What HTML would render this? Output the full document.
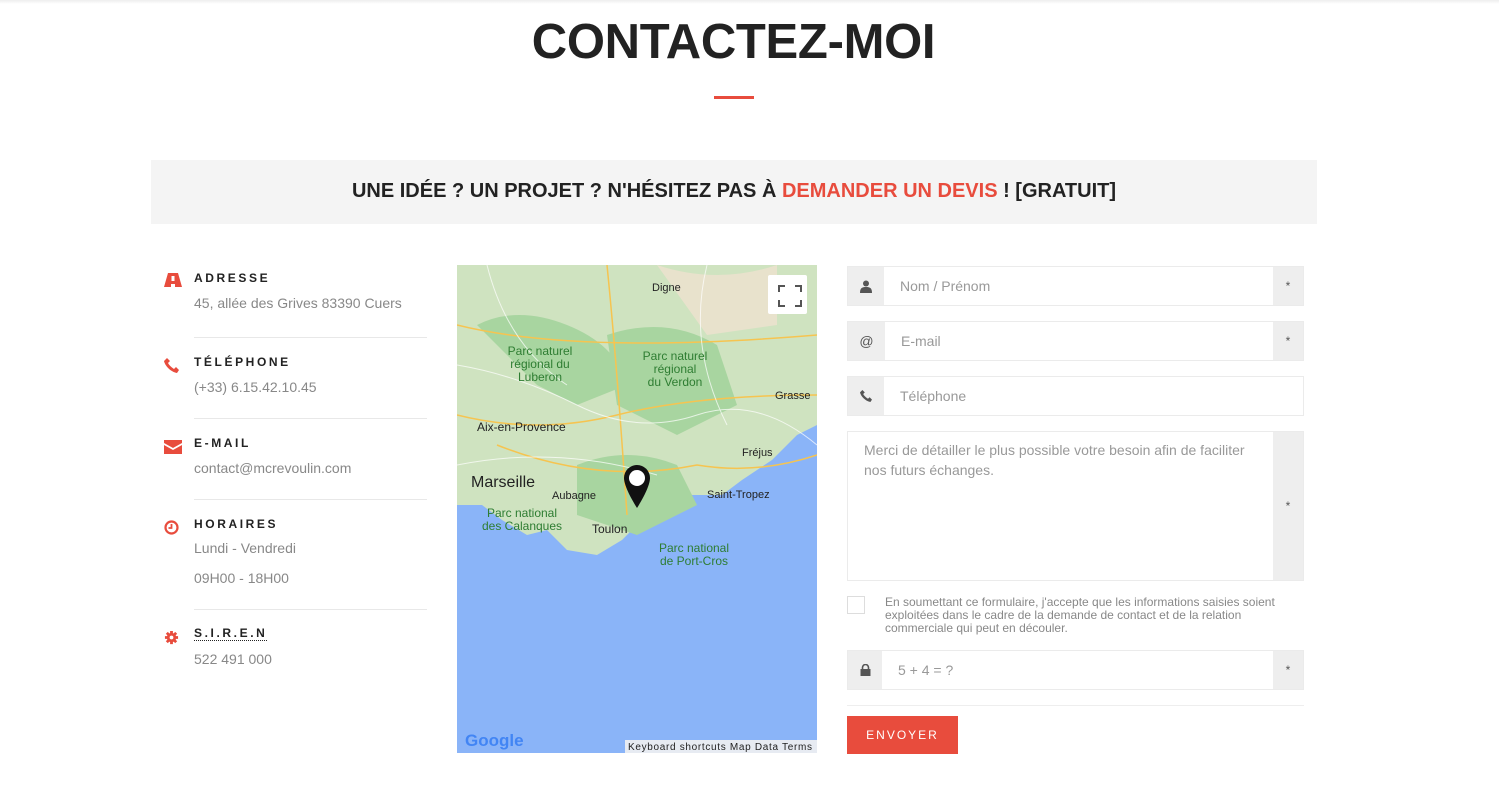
<!DOCTYPE html>
<html><head><meta charset="utf-8"><style>
*{box-sizing:border-box;margin:0;padding:0}
body{width:1499px;height:808px;background:#fff;font-family:"Liberation Sans",sans-serif;position:relative;overflow:hidden}
.a{position:absolute}
h1{position:absolute;top:14px;left:0;width:1467px;text-align:center;font-size:49px;font-weight:bold;color:#222;letter-spacing:-0.3px}
.lbl{position:absolute;left:194px;font-size:12px;font-weight:bold;letter-spacing:2.6px;color:#222}
.val{position:absolute;left:194px;font-size:14px;color:#888}
.hr{position:absolute;left:194px;width:233px;height:1px;background:#e8e8e8}
.ic{position:absolute;left:164px}
.fld{position:absolute;left:847px;width:457px;border:1px solid #ebebeb;background:#fff}
.pre{position:absolute;left:0;top:0;bottom:0;background:#eee;display:flex;align-items:center;justify-content:center;color:#555;font-size:14px}
.suf{position:absolute;right:0;top:0;bottom:0;width:30px;background:#eee;display:flex;align-items:center;justify-content:center;color:#555;font-size:12px}
.ph{position:absolute;color:#999;font-size:14px}
</style></head><body>
<div class="a" style="left:0;top:0;width:1499px;height:4px;background:linear-gradient(#eee,#fff)"></div>
<h1>CONTACTEZ-MOI</h1>
<div class="a" style="left:714px;top:96px;width:40px;height:3px;background:#e84c3d"></div>
<div class="a" style="left:151px;top:160px;width:1166px;height:64px;background:#f4f4f4;text-align:center;line-height:62px;font-size:20px;font-weight:bold;color:#222">UNE IDÉE ? UN PROJET ? N'HÉSITEZ PAS À <span style="color:#e84c3d">DEMANDER UN DEVIS</span> ! [GRATUIT]</div>

<svg class="ic" style="top:273px" width="18" height="14" viewBox="0 0 18 14"><path d="M4 0h10l4 14h-7v-3h-4v3H0z M7.5 3h3v5h-3z" fill="#e84c3d" fill-rule="evenodd"/></svg>
<div class="lbl" style="top:271px">ADRESSE</div>
<div class="val" style="top:295px">45, allée des Grives 83390 Cuers</div>
<div class="hr" style="top:337px"></div>
<svg class="ic" style="top:358px" width="15" height="15" viewBox="0 0 15 15"><path d="M3 0l3 3-2 2c1 2 3 4 6 6l2-2 3 3-2 3C7 14 1 8 0 3z" fill="#e84c3d"/></svg>
<div class="lbl" style="top:355px">TÉLÉPHONE</div>
<div class="val" style="top:379px">(+33) 6.15.42.10.45</div>
<div class="hr" style="top:418px"></div>
<svg class="ic" style="top:440px" width="18" height="14" viewBox="0 0 18 14"><path d="M0 0h18v3L9 8 0 3z M0 5l9 5 9-5v9H0z" fill="#e84c3d"/></svg>
<div class="lbl" style="top:436px">E-MAIL</div>
<div class="val" style="top:460px">contact@mcrevoulin.com</div>
<div class="hr" style="top:499px"></div>
<svg class="ic" style="top:520px" width="15" height="15" viewBox="0 0 15 15"><circle cx="7.5" cy="7.5" r="6" fill="none" stroke="#e84c3d" stroke-width="2.2"/><path d="M7.5 4v4H4.5" stroke="#e84c3d" stroke-width="1.8" fill="none"/></svg>
<div class="lbl" style="top:517px">HORAIRES</div>
<div class="val" style="top:540px">Lundi - Vendredi</div>
<div class="val" style="top:570px">09H00 - 18H00</div>
<div class="hr" style="top:609px"></div>
<svg class="ic" style="top:630px" width="15" height="15" viewBox="0 0 16 16"><circle cx="8" cy="8" r="5" fill="#e84c3d"/><g stroke="#e84c3d" stroke-width="3"><path d="M8 1v14M1 8h14M3 3l10 10M13 3L3 13"/></g><circle cx="8" cy="8" r="2" fill="#fff"/></svg>
<div class="lbl" style="top:627px;border-bottom:1px dotted #222;line-height:13px">S.I.R.E.N</div>
<div class="val" style="top:651px">522 491 000</div>

<svg class="a" style="left:457px;top:265px" width="360" height="488" viewBox="0 0 360 488">
<rect width="360" height="488" fill="#8ab4f8"/>
<path d="M0 0h360v160l-20 10-25 25-30 20-20 15-30 0-20 10-30 15-20 20-25 15-30-5-20-20-20 5-25-15-20-15-25 0-20-10L0 240z" fill="#cfe3c0"/>
<path d="M20 60q40-20 90 0t60 60l-50 20-40-20zM150 70q60-20 110 10l20 60-60 30-60-30zM120 200q50-20 100 0l20 40-60 30-60-20z" fill="#a8d5a0"/>
<path d="M200 0q60 20 120 0l0 60-70 10z" fill="#e8e2cc"/>
<g fill="none" stroke="#f6c450" stroke-width="1.5"><path d="M0 150q80 20 160 0t200-20M150 0q10 100 20 250M40 180q100 40 200 20 60 10 120-10M0 60q120 30 360 10"/></g>
<g fill="none" stroke="#fff" stroke-width="1" opacity=".7"><path d="M0 100q60 10 120 40t120 10 120 30M30 0q20 80 80 120M250 0q-20 80 20 160M0 200q100-20 200 10"/></g>
<g font-size="12" fill="#222" font-family="Liberation Sans"><text x="20" y="166">Aix-en-Provence</text><text x="14" y="222" font-size="16">Marseille</text><text x="95" y="234" font-size="11">Aubagne</text><text x="135" y="268">Toulon</text><text x="250" y="233" font-size="11">Saint-Tropez</text><text x="285" y="191" font-size="11">Fréjus</text><text x="195" y="26" font-size="11">Digne</text><text x="318" y="134" font-size="11">Grasse</text></g>
<g font-size="12" fill="#2e7d32" font-family="Liberation Sans" text-anchor="middle"><text x="83" y="90">Parc naturel</text><text x="83" y="103">régional du</text><text x="83" y="116">Luberon</text><text x="218" y="95">Parc naturel</text><text x="218" y="108">régional</text><text x="218" y="121">du Verdon</text><text x="65" y="252">Parc national</text><text x="65" y="265">des Calanques</text><text x="237" y="287">Parc national</text><text x="237" y="300">de Port-Cros</text></g>
<path d="M180 200a13 13 0 0 1 13 13c0 10-13 30-13 30s-13-20-13-30a13 13 0 0 1 13-13z" fill="#111"/><circle cx="180" cy="213" r="8" fill="#fff"/>
<rect x="311" y="10" width="39" height="39" fill="#fff" rx="2"/><path d="M322 27v-6h6M338 21h6v6M344 35v6h-6M328 41h-6v-6" stroke="#555" stroke-width="2" fill="none"/>
<text x="8" y="481" font-size="17" font-weight="bold" fill="#4285f4" font-family="Liberation Sans">Google</text>
<rect x="168" y="475" width="192" height="13" fill="#f1f1f1" opacity=".9"/>
<text x="171" y="485" font-size="10" fill="#222" font-family="Liberation Sans" textLength="184">Keyboard shortcuts   Map Data   Terms</text>
</svg>

<div class="fld" style="top:266px;height:40px"><div class="pre" style="width:36px"><svg width="12" height="13" viewBox="0 0 12 13"><circle cx="6" cy="3.5" r="3" fill="#555"/><path d="M0 13c0-5 2-6 6-6s6 1 6 6z" fill="#555"/></svg></div><div class="ph" style="left:52px;top:11px">Nom / Prénom</div><div class="suf">*</div></div>
<div class="fld" style="top:321px;height:40px"><div class="pre" style="width:37px">@</div><div class="ph" style="left:53px;top:11px">E-mail</div><div class="suf">*</div></div>
<div class="fld" style="top:376px;height:40px"><div class="pre" style="width:36px"><svg width="12" height="12" viewBox="0 0 15 15"><path d="M3 0l3 3-2 2c1 2 3 4 6 6l2-2 3 3-2 3C7 14 1 8 0 3z" fill="#555"/></svg></div><div class="ph" style="left:52px;top:11px">Téléphone</div></div>
<div class="fld" style="top:431px;height:150px"><div class="ph" style="left:16px;top:8px;line-height:20px;width:400px">Merci de détailler le plus possible votre besoin afin de faciliter nos futurs échanges.</div><div class="suf">*</div></div>
<div class="a" style="left:847px;top:596px;width:18px;height:18px;border:1px solid #ddd"></div>
<div class="a" style="left:885px;top:596px;width:420px;font-size:12px;line-height:13px;color:#888">En soumettant ce formulaire, j'accepte que les informations saisies soient exploitées dans le cadre de la demande de contact et de la relation commerciale qui peut en découler.</div>
<div class="fld" style="top:650px;height:40px"><div class="pre" style="width:34px"><svg width="11" height="12" viewBox="0 0 11 12"><path d="M2.5 5V3.5a3 3 0 0 1 6 0V5" stroke="#555" stroke-width="1.6" fill="none"/><rect x="0.5" y="5" width="10" height="7" fill="#555"/></svg></div><div class="ph" style="left:50px;top:11px">5 + 4 = ?</div><div class="suf">*</div></div>
<div class="a" style="left:847px;top:705px;width:457px;height:1px;background:#eee"></div>
<div class="a" style="left:847px;top:716px;width:111px;height:38px;background:#e84c3d;color:#fff;font-size:12px;letter-spacing:2px;text-align:center;line-height:38px">ENVOYER</div>
</body></html>
